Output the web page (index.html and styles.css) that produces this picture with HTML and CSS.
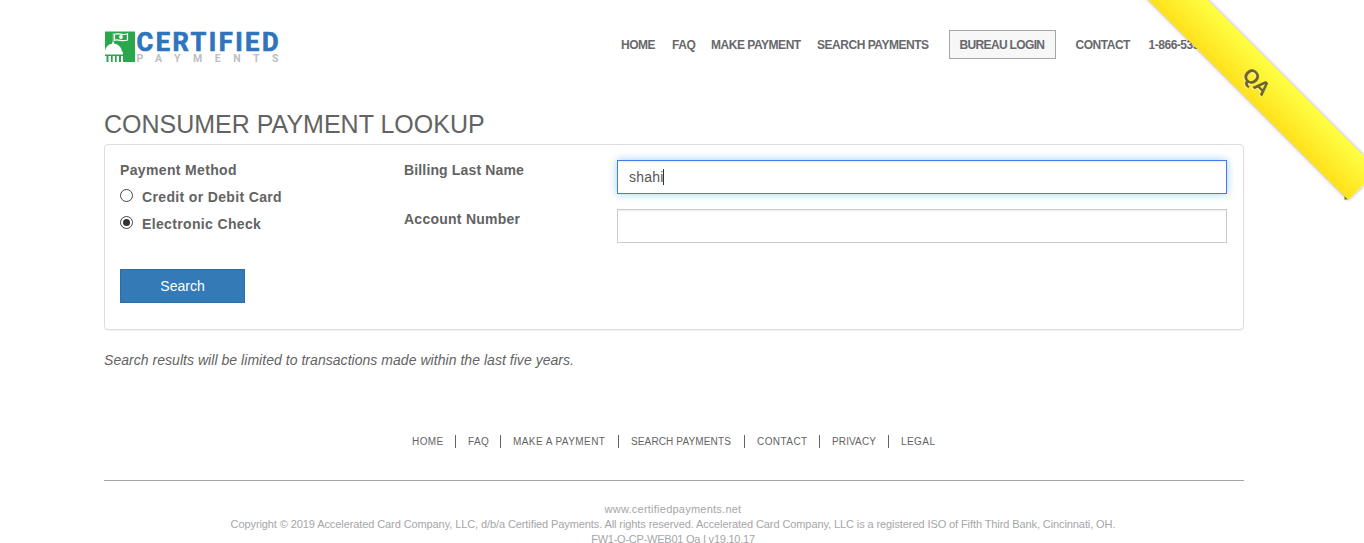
FILE: index.html
```
<!DOCTYPE html>
<html lang="en">
<head>
<meta charset="utf-8">
<title>Consumer Payment Lookup</title>
<link rel="stylesheet" href="styles.css">
</head>
<body>
<i class="corner-mark"></i>
<div class="ribbon"><span>QA</span></div>
<div class="container">
  <header class="header">
    <svg class="logo" width="176" height="34" viewBox="0 0 176 34">
      <rect x="1" y="1.500" width="30" height="30.500" fill="#2aa74a"/>
      <path d="M1 21.500c.5-4.500 3-7 7.200-7.700l.3-2h1.500l.3 2c4.200.7 7 3.200 7.700 7.700l1 1v2H1z" fill="#fff"/>
      <path d="M9.200 3v10" stroke="#fff" stroke-width=".6"/>
      <path d="M1 26h18v6H1z" fill="#fff"/>
      <path d="M2.500 26h2v6h-2zM7 26h1.700v6H7zM11 26h1.700v6H11zM15 26h2v6h-2z" fill="#2aa74a"/>
      <path d="M10.500 4.300c4-1.800 8 1.700 13-.5v6.200c-5 2.200-9-1.200-13 .3z" fill="none" stroke="#fff" stroke-width="1.200"/>
      <circle cx="17" cy="7" r="1.900" fill="#fff"/>
      <text class="logo-name" x="32.500" y="20.500" textLength="142">CERTIFIED</text>
      <text class="logo-sub" x="32.500" y="32" textLength="142">PAYMENTS</text>
    </svg>
    <nav class="nav">
      <a>HOME</a><a>FAQ</a><a>MAKE PAYMENT</a><a>SEARCH PAYMENTS</a><a class="login">BUREAU LOGIN</a><a>CONTACT</a><a>1-866-539-2020</a>
    </nav>
  </header>
  <h1 class="title">CONSUMER PAYMENT LOOKUP</h1>
  <form class="panel">
    <div class="methods">
      <div class="label method-title">Payment Method</div>
      <div class="option"><svg class="radio" width="13" height="13"><circle class="ring" cx="6.500" cy="6.500" r="6"/></svg><span class="label">Credit or Debit Card</span></div>
      <div class="option"><svg class="radio" width="13" height="13"><circle class="ring" cx="6.500" cy="6.500" r="6"/><circle class="dot" cx="6.500" cy="6.500" r="3.500"/></svg><span class="label">Electronic Check</span></div>
      <div class="button">Search</div>
    </div>
    <div class="fields">
      <span class="label billing">Billing Last Name</span><div class="input focused">shahi<i class="caret"></i></div>
      <span class="label account">Account Number</span><div class="input"></div>
    </div>
  </form>
  <p class="note">Search results will be limited to transactions made within the last five years.</p>
  <footer>
    <div class="links"><a>HOME</a><a>FAQ</a><a>MAKE A PAYMENT</a><a class="tight">SEARCH PAYMENTS</a><a>CONTACT</a><a class="tight">PRIVACY</a><a>LEGAL</a></div>
    <div class="legal">
      <div class="site">www.certifiedpayments.net</div>
      <div class="copyright">Copyright © 2019 Accelerated Card Company, LLC, d/b/a Certified Payments. All rights reserved. Accelerated Card Company, LLC is a registered ISO of Fifth Third Bank, Cincinnati, OH.</div>
      <div class="version">FW1-Q-CP-WEB01 Qa I v19.10.17</div>
    </div>
  </footer>
</div>
</body>
</html>
```
FILE: styles.css
```
* { box-sizing: border-box; }
html, body { height: 543px; overflow: hidden; }
body { margin: 0; position: relative; background: #fff; color: #636363; font: 14px/20px "Liberation Sans", Arial, sans-serif; }
.container { width: 1140px; margin-left: 104px; }
.header { display: flex; height: 110px; padding-top: 30px; }
.logo { flex: none; }
.logo-name { font: bold 25.500px Roboto, Arial, sans-serif; fill: #2e75bd; stroke: #2e75bd; stroke-width: .7px; }
.logo-sub { font: bold 10.500px Roboto, Arial, sans-serif; fill: #bdbec1; }
.nav { display: grid; grid-template-columns: 51px 39px 106px 132px 126.500px 73px 100px; height: 29px; margin-left: 341px; font: bold 12px/30px "Liberation Sans", Arial, sans-serif; letter-spacing: -.47px; white-space: nowrap; color: #67686b; }
.login { width: 107px; height: 29px; padding-left: 9.500px; line-height: 28px; letter-spacing: -.65px; background: #f7f7f7; border: 1px solid #a5a5a5; }
.title { margin: 0; height: 34px; font-size: 25px; line-height: 29px; font-weight: 400; white-space: nowrap; }
.panel { display: flex; height: 186px; padding: 15px; margin: 0; border: 1px solid #ddd; border-radius: 4px; box-shadow: 0 1px 1px rgba(0,0,0,.05); }
.methods { width: 284px; }
.label { font-weight: 700; letter-spacing: .35px; }
.billing { letter-spacing: .15px; }
.account { letter-spacing: .25px; }
.method-title { height: 27px; }
.option { display: flex; gap: 9px; height: 27px; }
.radio { margin-top: 2px; }
.ring { fill: #fff; stroke: #444; }
.dot { fill: #333; }
.button { width: 125px; height: 34px; margin-top: 28px; border: 1px solid #2e6da4; background: #337ab7; color: #fff; text-align: center; line-height: 32px; }
.fields { display: grid; grid-template-columns: 213px 610px; grid-template-rows: 49px 34px; }
.input { display: flex; align-items: center; height: 34px; padding-left: 11px; border: 1px solid #ccc; box-shadow: inset 0 1px 1px rgba(0,0,0,.075); color: #555; }
.focused { letter-spacing: .2px; border-color: #3f7ee8; box-shadow: inset 0 1px 1px rgba(0,0,0,.075), 0 0 8px rgba(102,175,233,.6); }
.caret { width: 1px; height: 16px; background: #333; }
.note { margin: 20px 0 0; font-style: italic; letter-spacing: .04px; white-space: nowrap; }
.links { display: grid; grid-template-columns: 56px 45px 118px 126px 75px 69px 60px; height: 110px; margin-left: 308px; padding-top: 65px; font-size: 10px; line-height: 13px; letter-spacing: .43px; white-space: nowrap; }
.links a { height: 13px; margin-right: 12px; border-right: 1px solid #636363; }
.links .tight { letter-spacing: .13px; }
.links a:last-child { border: 0; }
.legal { padding: 21px 2px 0 0; border-top: 1px solid #a5a5a5; color: #a5a6a9; font-size: 11px; line-height: 15px; text-align: center; white-space: nowrap; }
.site { letter-spacing: .24px; }
.copyright { letter-spacing: -.095px; }
.version { letter-spacing: -.24px; }
.ribbon { position: absolute; z-index: 2; left: 1106.500px; top: 58.300px; width: 300px; height: 42px; padding-left: 3px; transform: rotate(45deg); text-align: center; background: linear-gradient(#ffff44, #ffe11c); box-shadow: 0 0 4px rgba(0,0,0,.35); color: #6b6432; font: bold 20px/47px "Liberation Sans", Arial, sans-serif; letter-spacing: -.2px; text-shadow: 0 1px 0 rgba(255,255,255,.6); }
.corner-mark { position: absolute; z-index: 1; left: 1344px; top: 196px; width: 4px; height: 4px; border: 1px solid #b5cf9b; background: #4d7a28; }
```
